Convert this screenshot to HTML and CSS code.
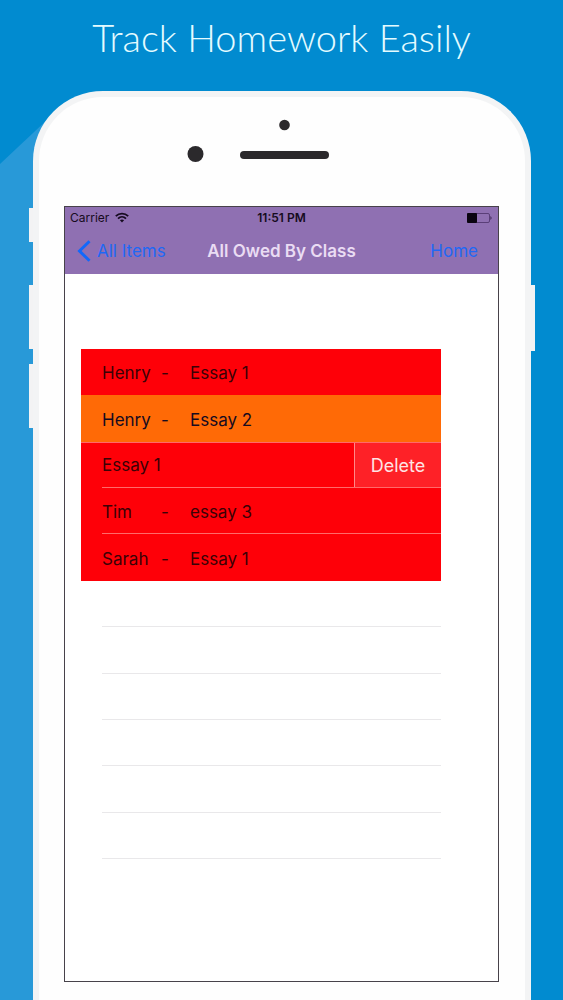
FILE: index.html
```html
<!DOCTYPE html>
<html lang="en">
<head>
<meta charset="utf-8">
<meta name="viewport" content="width=device-width, initial-scale=1">
<title>Track Homework Easily</title>
<link rel="stylesheet" href="styles.css">
</head>
<body>
<h1 class="headline">Track Homework Easily</h1>

<div class="phone">
  <span class="side-button mute"></span>
  <span class="side-button volume-up"></span>
  <span class="side-button volume-down"></span>
  <span class="side-button power"></span>

  <!-- camera, sensor and speaker -->
  <div class="hardware">
    <svg width="190" height="48" viewBox="0 0 190 48" fill="#2b292c" aria-hidden="true">
      <circle cx="97.500" cy="7" r="5.300"/>
      <circle cx="8.500" cy="36" r="8"/>
      <rect x="53" y="33" width="89" height="8" rx="4"/>
    </svg>
  </div>

  <div class="screen">
    <header class="topbar">
      <div class="status">
        <span class="carrier">Carrier
          <svg width="14" height="11" viewBox="0 0 14 11" fill="none" stroke="#160b20" stroke-width="1.800" aria-hidden="true">
            <path d="M.8 4.200C4.300.7 9.700.7 13.200 4.200"/>
            <path d="M3 6.600C5.300 4.300 8.700 4.300 11 6.600"/>
            <path d="M7 10.500L4.900 8.200C6 7.100 8 7.100 9.100 8.200Z" fill="#160b20" stroke="none"/>
          </svg>
        </span>
        <span class="time">11:51 PM</span>
        <svg class="battery" width="27" height="12" viewBox="0 0 27 12" aria-hidden="true">
          <rect x="1.500" y="1.500" width="22" height="9" rx="1.500" fill="none" stroke="#5a3f78"/>
          <rect x="1" y="1" width="10" height="10" rx="1" fill="#0a0410"/>
          <path d="M24.500 4q2 2 0 4z" fill="#2c1740"/>
        </svg>
      </div>
      <nav class="nav">
        <a class="back" href="#">
          <svg width="14" height="22" viewBox="0 0 14 22" fill="none" stroke="#1268fb" stroke-width="3" aria-hidden="true">
            <path d="M12.500 1.200L2.500 11L12.500 20.800"/>
          </svg>
          All Items
        </a>
        <h2 class="nav-title">All Owed By Class</h2>
        <a class="home" href="#">Home</a>
      </nav>
    </header>

    <ul class="list">
      <li class="row late plain"><span>Henry</span><span>-</span><span>Essay 1</span></li>
      <li class="row soon plain"><span>Henry</span><span>-</span><span>Essay 2</span></li>
      <li class="row late swiped"><span>Essay 1</span><button class="delete" type="button">Delete</button></li>
      <li class="row late"><span>Tim</span><span>-</span><span>essay 3</span></li>
      <li class="row late plain"><span>Sarah</span><span>-</span><span>Essay 1</span></li>
      <li class="row"></li>
      <li class="row"></li>
      <li class="row"></li>
      <li class="row"></li>
      <li class="row"></li>
      <li class="row"></li>
    </ul>
  </div>
</div>
</body>
</html>
```
FILE: styles.css
```css
* {
  box-sizing: border-box;
}

body {
  margin: 0;
  min-height: 100vh;
  display: flex;
  flex-direction: column;
  position: relative;
  background: #018bd0;
  font-family: Inter, "Liberation Sans", sans-serif;
  color: #160b20;
}

/* long shadow to the left of the phone */
body::before {
  content: "";
  position: absolute;
  top: 0;
  bottom: 0;
  left: 0;
  width: 50px;
  background: #2899d8;
  clip-path: polygon(0 164px, 100% 117px, 100% 100%, 0 100%);
}

.headline {
  margin: 0;
  padding-top: 13px;
  height: 91px;
  font-family: Lato, sans-serif;
  font-size: 38px;
  font-weight: 300;
  line-height: 48px;
  text-align: center;
  color: #e4fbff;
}

/* Phone body */
.phone {
  position: relative;
  flex: 1;
  margin: 0 32px 0 33px;
  padding: 0 26px 18px 25px;
  background: #fefefe;
  border: 6px solid #f3f4f5;
  border-bottom: none;
  border-radius: 70px 70px 0 0;
}

.side-button {
  position: absolute;
  left: -10px;
  width: 4px;
  height: 64px;
  background: #f3f3f4;
}

.mute {
  top: 111px;
  height: 34px;
}

.volume-up {
  top: 188px;
}

.volume-down {
  top: 267px;
}

.power {
  top: 188px;
  left: auto;
  right: -10px;
  height: 66px;
}

.hardware {
  height: 109px;
  padding-top: 21px;
  text-align: center;
}

/* Screen */
.screen {
  border: 1px solid #47424a;
  padding-bottom: 122px;
  background: #fff;
}

.topbar {
  background: #8f70b2;
}

.status {
  display: grid;
  grid-template-columns: 1fr auto 1fr;
  align-items: center;
  height: 21px;
  padding: 0 5px;
  font-size: 12px;
}

.carrier {
  display: flex;
  align-items: center;
  gap: 6px;
}

.time {
  font-weight: 600;
}

.battery {
  justify-self: end;
}

.nav {
  display: grid;
  grid-template-columns: 1fr auto 1fr;
  align-items: center;
  height: 46px;
  padding: 0 12px;
  font-size: 17px;
}

.nav a {
  color: #1f68f5;
  text-decoration: none;
}

.back {
  display: flex;
  align-items: center;
  gap: 6px;
}

.nav-title {
  margin: 0;
  font-size: 17px;
  font-weight: 600;
  color: #eadcf3;
}

.home {
  justify-self: end;
  padding-right: 8px;
}

/* Homework list */
.list {
  display: grid;
  grid-auto-rows: 1fr;
  height: 510px;
  margin: 75px 57px 0 16px;
  padding: 0;
  list-style: none;
  font-size: 17px;
}

.row {
  position: relative;
  display: grid;
  grid-template-columns: 59px 29px 1fr;
  align-items: center;
  padding: 2px 0 0 21px;
}

.row::after {
  content: "";
  position: absolute;
  left: 21px;
  right: 0;
  bottom: 0;
  height: 1px;
  background: #e9e8ea;
}

.plain::after {
  display: none;
}

.late {
  background: #fe0008;
  color: #3a0206;
}

.late::after {
  background: #ff6a6a;
}

.soon {
  background: #ff6a06;
}

.swiped {
  grid-template-columns: 1fr 87px;
  padding-top: 0;
  border-top: 1px solid #ff6a6a;
}

.delete {
  align-self: stretch;
  padding: 0;
  border: none;
  border-left: 1px solid #ff8a8a;
  background: #fe2127;
  color: #ffe4e4;
  font: inherit;
  font-size: 18px;
}
```
